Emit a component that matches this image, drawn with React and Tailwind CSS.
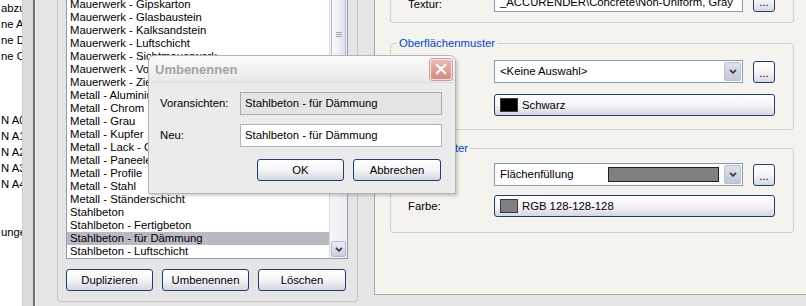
import React from 'react';

const listItems = [
  'Mauerwerk - Gipskarton',
  'Mauerwerk - Glasbaustein',
  'Mauerwerk - Kalksandstein',
  'Mauerwerk - Luftschicht',
  'Mauerwerk - Sichtmauerwerk',
  'Mauerwerk - Vormauerwerk',
  'Mauerwerk - Ziegel',
  'Metall - Aluminium',
  'Metall - Chrom',
  'Metall - Grau',
  'Metall - Kupfer',
  'Metall - Lack - Glanz',
  'Metall - Paneele',
  'Metall - Profile',
  'Metall - Stahl',
  'Metall - Ständerschicht',
  'Stahlbeton',
  'Stahlbeton - Fertigbeton',
  'Stahlbeton - für Dämmung',
  'Stahlbeton - Luftschicht',
];

// clipped column on the far left
const sideLines = ['abzug', 'ne Al', 'ne De', 'ne Ob', '', '', '', 'N A0', 'N A1', 'N A2', 'N A3', 'N A4', '', '', 'unge'];

const Chevron = () => (
  <svg width="8" height="5" viewBox="0 0 8 5">
    <path d="M1 0.8 L4 3.8 L7 0.8" fill="none" stroke="#3c3c3c" strokeWidth="1.8" />
  </svg>
);

const XpButton = ({ children, className = '' }) => (
  <button
    className={`h-[22px] rounded-[3px] border border-[#1d3f6f] bg-linear-to-b from-white via-[#f4f4f7] to-[#d6d6e2] text-black flex items-center justify-center ${className}`}
  >
    {children}
  </button>
);

const DotsButton = () => (
  <XpButton className="w-[22px] ml-[10px] pt-[3px]">...</XpButton>
);

const Dropdown = ({ children }) => (
  <div className="w-[249px] h-[23px] border border-[#7f9db9] bg-white flex items-stretch">
    <div className="flex-1 flex items-center pl-[5px] whitespace-nowrap overflow-hidden">{children}</div>
    <div className="w-[17px] m-px rounded-[2px] border border-[#b9c0d3] bg-linear-to-b from-[#dde1ec] to-[#c3c8d8] flex items-center justify-center">
      <Chevron />
    </div>
  </div>
);

const SwatchButton = ({ color, label }) => (
  <XpButton className="w-[281px] h-[20px] !justify-start pl-[5px] gap-[4px]">
    <span className={`w-[18px] h-[14px] border border-[#3a3a3a] ${color}`} />
    <span>{label}</span>
  </XpButton>
);

const Row = ({ label, children, className = '' }) => (
  <div className={`flex items-center ${className}`}>
    <div className="w-[103px] pl-[17px] whitespace-nowrap">{label}</div>
    {children}
  </div>
);

const RenameDialog = () => (
  <div className="absolute left-[148px] top-[55px] w-[308px] h-[139px] flex flex-col rounded-t-[7px] border border-[#b4b4b4] bg-[#ebebeb] shadow-[2px_2px_3px_rgba(0,0,0,0.18)]">
    <div className="h-[27px] shrink-0 rounded-t-[6px] bg-linear-to-b from-[#fbfbfb] to-[#e9e9e9] border-b border-[#dcdcdc] flex items-center pl-[6px] pr-[3px]">
      <span className="text-[13px] font-bold text-[#a3a3a3] flex-1">Umbenennen</span>
      <div className="w-[22px] h-[21px] rounded-[3px] border border-[#f3e3e1] bg-linear-to-b from-[#eab9b3] to-[#d58b82] flex items-center justify-center shadow-[0_0_0_1px_#c9a19c]">
        <svg width="12" height="12" viewBox="0 0 12 12">
          <path d="M2 2 L10 10 M10 2 L2 10" stroke="white" strokeWidth="2.2" strokeLinecap="square" />
        </svg>
      </div>
    </div>
    <div className="flex flex-col pl-[11px] pt-[9px]">
      <div className="flex items-center">
        <div className="w-[80px]">Voransichten:</div>
        <div className="w-[202px] h-[23px] border border-[#ababab] bg-[#e4e4e4] flex items-center pl-[4px]">
          Stahlbeton - für Dämmung
        </div>
      </div>
      <div className="flex items-center mt-[9px]">
        <div className="w-[80px]">Neu:</div>
        <div className="w-[202px] h-[23px] border border-[#a9b5c5] bg-white flex items-center pl-[4px]">
          Stahlbeton - für Dämmung
        </div>
      </div>
      <div className="flex justify-end gap-[9px] w-[281px] mt-[12px]">
        <XpButton className="w-[87px]">OK</XpButton>
        <XpButton className="w-[88px]">Abbrechen</XpButton>
      </div>
    </div>
  </div>
);

export default function App() {
  return (
    <div className="relative flex w-[806px] h-[306px] overflow-hidden bg-[#e5e5e5] text-[11.3px] leading-[13px] text-black font-['Liberation_Sans',Arial,sans-serif]">
      {/* far left list, clipped */}
      <div className="w-[22px] shrink-0 bg-white overflow-hidden">
        {sideLines.map((t, i) => (
          <div key={i} className="h-[16px] leading-[16px] whitespace-nowrap pl-px">
            {t}
          </div>
        ))}
      </div>
      <div className="w-px shrink-0 bg-[#cdcdcd]" />
      <div className="w-[10px] shrink-0 bg-[#dcdcdc]" />
      <div className="w-[2px] shrink-0 bg-[#6f6f6f]" />
      <div className="w-px shrink-0 bg-[#f6f6f6]" />

      {/* material list panel */}
      <div className="w-[338px] shrink-0 pl-[21px]">
        <div className="w-[301px] h-[302px] border-x border-b border-[#c6c6c6] rounded-b-[4px] px-[8px]">
          <div className="w-[282px] h-[259px] border-x border-b border-[#8c9db5] bg-white flex">
            <div className="flex-1 overflow-hidden">
              <div className="-mt-[2px]">
                {listItems.map((item) => (
                  <div
                    key={item}
                    className={`h-[13px] leading-[13px] pl-[3px] whitespace-nowrap ${
                      item === 'Stahlbeton - für Dämmung' ? 'bg-[#b9b9c1]' : ''
                    }`}
                  >
                    {item}
                  </div>
                ))}
              </div>
            </div>
            <div className="w-[18px] flex flex-col border-l border-[#d9d9d9] bg-linear-to-r from-[#f6f6f8] to-[#ececf3]">
              <div className="mx-px h-[70px] rounded-b-[2px] border border-t-0 border-[#b4bccd] bg-linear-to-r from-[#fcfcfe] to-[#dee2ec] flex flex-col items-center justify-center gap-[1px]">
                <span className="w-[6px] h-px bg-[#9ca3b3]" />
                <span className="w-[6px] h-px bg-[#9ca3b3]" />
                <span className="w-[6px] h-px bg-[#9ca3b3]" />
              </div>
              <div className="mt-auto mx-px mb-px h-[16px] rounded-[2px] border border-[#b5bdd0] bg-linear-to-b from-[#eceef5] to-[#c8cddd] flex items-center justify-center">
                <Chevron />
              </div>
            </div>
          </div>
          <div className="flex gap-[9px] mt-[10px]">
            <XpButton className="w-[87px]">Duplizieren</XpButton>
            <XpButton className="w-[87px]">Umbenennen</XpButton>
            <XpButton className="w-[88px]">Löschen</XpButton>
          </div>
        </div>
      </div>

      {/* properties panel */}
      <div className="flex-1 flex flex-col">
        <div className="h-[295px] shrink-0 bg-[#f4f3ee] border-l border-b border-[#a7a7a7] pl-[15px]">
          <div className="w-[404px] h-[23px] flex flex-col border-x border-b border-[#d0d0c8] rounded-b-[4px]">
            <div className="flex items-start -mt-[10px]">
              <div className="w-[103px] pl-[17px] mt-[8px]">Textur:</div>
              <div className="w-[249px] h-[22px] border border-[#7f9db9] bg-white flex items-end pb-[2px] pl-[5px] whitespace-nowrap overflow-hidden">
                _ACCURENDER\Concrete\Non-Uniform, Gray
              </div>
              <DotsButton />
            </div>
          </div>

          <fieldset className="w-[404px] mt-[14px] border border-[#d0d0c8] rounded-[4px]">
            <legend className="ml-[6px] px-[2px] leading-[13px] text-[#0046d5]">Oberflächenmuster</legend>
            <div className="pt-[10px] pb-[13px]">
              <Row label="Muster:">
                <Dropdown>&lt;Keine Auswahl&gt;</Dropdown>
                <DotsButton />
              </Row>
              <Row label="Farbe:" className="mt-[11px]">
                <SwatchButton color="bg-black" label="Schwarz" />
              </Row>
            </div>
          </fieldset>

          <fieldset className="w-[404px] mt-[12px] border border-[#d0d0c8] rounded-[4px]">
            <legend className="ml-[6px] px-[2px] leading-[13px] text-[#0046d5]">Schnittmuster</legend>
            <div className="pt-[8px] pb-[15px]">
              <Row label="Muster:">
                <Dropdown>
                  <span className="flex-1">Flächenfüllung</span>
                  <span className="w-[111px] h-[15px] mr-[4px] border border-[#202020] bg-[#808080]" />
                </Dropdown>
                <DotsButton />
              </Row>
              <Row label="Farbe:" className="mt-[9px]">
                <SwatchButton color="bg-[#808080]" label="RGB 128-128-128" />
              </Row>
            </div>
          </fieldset>
        </div>
      </div>

      <RenameDialog />
    </div>
  );
}
